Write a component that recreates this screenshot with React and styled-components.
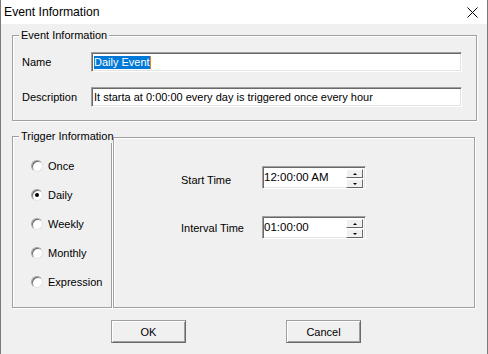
import React from 'react'
import styled, { createGlobalStyle } from 'styled-components'

const GlobalStyle = createGlobalStyle`
  html, body {
    margin: 0;
    padding: 0;
    background: #f0f0f0;
  }
  body {
    font-family: "Liberation Sans", Arial, sans-serif;
    font-size: 11px;
    color: #000;
  }
`

const Window = styled.div`
  width: 488px;
  height: 354px;
  box-sizing: border-box;
  background: #f0f0f0;
  border-left: 1px solid #7a7a7a;
  border-right: 1px solid #7a7a7a;
  display: flex;
  flex-direction: column;
  overflow: hidden;
`

const TitleBar = styled.div`
  height: 24px;
  flex: none;
  background: #fff;
  display: flex;
  align-items: center;
  justify-content: space-between;
  padding: 0 9px 0 3px;
  font-family: "Liberation Sans", Arial, sans-serif;
  font-size: 12.2px;
`

const Body = styled.div`
  padding: 5px 10px 0 11px;
  display: flex;
  flex-direction: column;
`

const GroupBox = styled.fieldset`
  margin: 0;
  padding: 0;
  min-width: 0;
  box-sizing: border-box;
  width: ${p => p.width || 'auto'};
  height: ${p => p.height || 'auto'};
  border: 1px solid #a0a0a0;
  box-shadow: 1px 1px 0 #fff, inset 1px 1px 0 #fff;
  flex: none;
`

const Caption = styled.legend`
  margin-left: 6px;
  padding: 0 2px;
  line-height: 13px;
  background: #f0f0f0;
  white-space: nowrap;
`

const EventFields = styled.div`
  display: flex;
  flex-direction: column;
  gap: 15px;
  padding: 10px 14px 13px 9px;
`

const FieldRow = styled.div`
  display: flex;
  align-items: center;
`

const Label = styled.span`
  width: ${p => p.width}px;
  flex: none;
  margin-top: ${p => p.drop || 0}px;
`

const TextBox = styled.div`
  flex: 1;
  height: 20px;
  box-sizing: border-box;
  background: #fff;
  border-style: solid;
  border-width: 1px;
  border-color: #a0a0a0 #fff #fff #a0a0a0;
  box-shadow: inset 1px 1px 0 #696969, inset -1px -1px 0 #e3e3e3;
  padding: 0 3px 0 2px;
  display: flex;
  align-items: center;
  white-space: nowrap;
  overflow: hidden;
`

const Selected = styled.span`
  background: #0078d7;
  color: #fff;
  line-height: 13px;
  border-right: 1px solid #e8832a;
`

const TriggerRow = styled.div`
  display: flex;
  align-items: flex-start;
  margin-top: 9px;
`

const RadioList = styled.div`
  display: flex;
  flex-direction: column;
  padding: 8px 0 0 18px;
`

const RadioRow = styled.label`
  height: 29px;
  display: flex;
  align-items: center;
  gap: 5px;
`

const RadioDot = styled.span`
  width: 12px;
  height: 12px;
  box-sizing: border-box;
  border-radius: 50%;
  background: #fff;
  border: 1px solid;
  border-color: #a0a0a0 #e3e3e3 #e3e3e3 #a0a0a0;
  box-shadow: inset 1px 1px 0 #696969;
  display: flex;
  align-items: center;
  justify-content: center;
  &::after {
    content: '';
    width: 4px;
    height: 4px;
    border-radius: 50%;
    background: ${p => (p.checked ? '#000' : 'transparent')};
  }
`

const TimePanel = styled.div`
  width: 362px;
  height: 171px;
  box-sizing: border-box;
  margin: 7px 0 0 1px;
  border: 1px solid #a0a0a0;
  box-shadow: 1px 1px 0 #fff, inset 1px 1px 0 #fff;
  padding: 28px 0 0 67px;
  display: flex;
  flex-direction: column;
  gap: 27px;
`

const SpinBox = styled.div`
  width: 104px;
  height: 23px;
  box-sizing: border-box;
  background: #fff;
  border-style: solid;
  border-width: 1px;
  border-color: #a0a0a0 #fff #fff #a0a0a0;
  box-shadow: inset 1px 1px 0 #696969, inset -1px -1px 0 #e3e3e3;
  display: flex;
  align-items: flex-start;
  justify-content: space-between;
  padding: 2px 2px 0 1px;
  font-size: 11.5px;
`

const SpinText = styled.span`
  line-height: 17px;
`

const Spinner = styled.div`
  display: flex;
  flex-direction: column;
  gap: 1px;
`

const SpinButton = styled.div`
  width: 17px;
  height: 9px;
  box-sizing: border-box;
  background: #f0f0f0;
  border: 1px solid;
  border-color: #fff #696969 #696969 #fff;
  display: flex;
  align-items: center;
  justify-content: center;
  &::after {
    content: '';
    border-left: 2px solid transparent;
    border-right: 2px solid transparent;
    ${p =>
      p.up
        ? 'border-bottom: 2px solid #000;'
        : 'border-top: 2px solid #000;'}
  }
`

const ButtonBar = styled.div`
  display: flex;
  gap: 100px;
  padding-left: 99px;
  margin-top: 12px;
`

const Button = styled.button`
  width: 75px;
  height: 23px;
  box-sizing: border-box;
  background: #f0f0f0;
  border: 1px solid;
  border-color: #a0a0a0 #696969 #696969 #a0a0a0;
  box-shadow: inset 1px 1px 0 #fff, inset -1px -1px 0 #a0a0a0;
  font-family: "Liberation Sans", Arial, sans-serif;
  font-size: 11px;
  color: #000;
  padding: 0;
`

const CloseIcon = () => (
  <svg width="11" height="11" viewBox="0 0 11 11">
    <path d="M0.5 0.5L10.5 10.5M10.5 0.5L0.5 10.5" stroke="#000" strokeWidth="1" />
  </svg>
)

const triggers = ['Once', 'Daily', 'Weekly', 'Monthly', 'Expression']

export default function App() {
  return (
    <Window>
      <GlobalStyle />
      <TitleBar>
        <span>Event Information</span>
        <CloseIcon />
      </TitleBar>
      <Body>
        <GroupBox>
          <Caption>Event Information</Caption>
          <EventFields>
            <FieldRow>
              <Label width={69}>Name</Label>
              <TextBox>
                <Selected>Daily Event</Selected>
              </TextBox>
            </FieldRow>
            <FieldRow>
              <Label width={69}>Description</Label>
              <TextBox>It starta at 0:00:00 every day is triggered once every hour</TextBox>
            </FieldRow>
          </EventFields>
        </GroupBox>
        <TriggerRow>
          <GroupBox width="100px" height="178px">
            <Caption>Trigger Information</Caption>
            <RadioList>
              {triggers.map(t => (
                <RadioRow key={t}>
                  <RadioDot checked={t === 'Daily'} />
                  {t}
                </RadioRow>
              ))}
            </RadioList>
          </GroupBox>
          <TimePanel>
            <FieldRow>
              <Label width={81} drop={5}>Start Time</Label>
              <SpinBox>
                <SpinText>12:00:00 AM</SpinText>
                <Spinner>
                  <SpinButton up />
                  <SpinButton />
                </Spinner>
              </SpinBox>
            </FieldRow>
            <FieldRow>
              <Label width={81}>Interval Time</Label>
              <SpinBox>
                <SpinText>01:00:00</SpinText>
                <Spinner>
                  <SpinButton up />
                  <SpinButton />
                </Spinner>
              </SpinBox>
            </FieldRow>
          </TimePanel>
        </TriggerRow>
        <ButtonBar>
          <Button>OK</Button>
          <Button>Cancel</Button>
        </ButtonBar>
      </Body>
    </Window>
  )
}
